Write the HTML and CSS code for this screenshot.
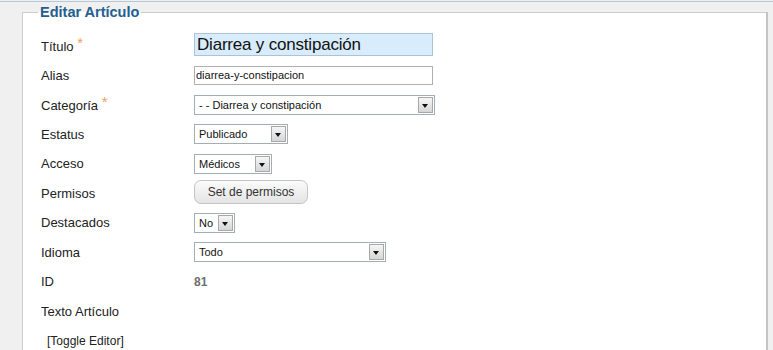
FILE: index.html
```html
<!DOCTYPE html>
<html lang="es">
<head>
    <meta charset="UTF-8">
    <title>Editar Artículo</title>
    <link rel="stylesheet" href="styles.css">
</head>
<body>
    <div class="topline"></div>
    <div class="page">
        <fieldset class="adminform">
            <legend>Editar Artículo</legend>

            <div class="row">
                <label>Título <span class="star">*</span></label>
                <input class="title-input" type="text" value="Diarrea y constipación">
            </div>

            <div class="row">
                <label>Alias</label>
                <input class="alias-input" type="text" value="diarrea-y-constipacion">
            </div>

            <div class="row">
                <label>Categoría <span class="star">*</span></label>
                <div class="select sel-cat"><span class="val">- - Diarrea y constipación</span><span class="arrow"></span></div>
            </div>

            <div class="row">
                <label>Estatus</label>
                <div class="select sel-state"><span class="val">Publicado</span><span class="arrow"></span></div>
            </div>

            <div class="row">
                <label>Acceso</label>
                <div class="select sel-access"><span class="val">Médicos</span><span class="arrow"></span></div>
            </div>

            <div class="row">
                <label>Permisos</label>
                <button class="perm-btn">Set de permisos</button>
            </div>

            <div class="row">
                <label>Destacados</label>
                <div class="select sel-feat"><span class="val">No</span><span class="arrow"></span></div>
            </div>

            <div class="row">
                <label>Idioma</label>
                <div class="select sel-lang"><span class="val">Todo</span><span class="arrow"></span></div>
            </div>

            <div class="row">
                <label>ID</label>
                <span class="readonly">81</span>
            </div>

            <div class="row">
                <label class="wide">Texto Artículo</label>
            </div>

            <div class="row toggle-row">
                <a href="#">[Toggle Editor]</a>
            </div>
        </fieldset>
    </div>
</body>
</html>
```

FILE: styles.css
```css
body {
    margin: 0;
    background-color: #f0f0f0;
    font-family: "Liberation Sans", Arial, sans-serif;
    color: #333;
    height: 350px;
    overflow: hidden;
}
.topline {
    height: 1px;
    margin-top: 1px;
    background-color: #b4c8dc;
}
.page {
    padding: 0 5px 0 22px;
}
.adminform {
    margin: 2px 0 0 0;
    padding: 11px 0 0 18px;
    border: 1px solid #cccccc;
    border-right: 2px solid #c4c4c4;
    background-color: #fff;
    height: 400px;
}
.adminform legend {
    padding: 0 2px;
    margin-left: -3px;
    font-size: 14.5px;
    font-weight: bold;
    color: #24608f;
}
.row {
    display: flex;
    align-items: center;
    height: 29.5px;
}
.row label {
    width: 153px;
    flex: none;
    font-size: 13px;
    color: #222;
}
.star {
    position: relative;
    top: -3px;
    font-size: 15px;
    color: #eea25c;
}
input {
    font-family: "Liberation Sans", Arial, sans-serif;
    border: 1px solid #b0b0b0;
    margin: 0;
    box-sizing: border-box;
}
.title-input {
    width: 239px;
    height: 23px;
    margin-top: -2px;
    padding: 0 0 0 2px;
    font-size: 17px;
    letter-spacing: -0.2px;
    color: #111;
    background-color: #d9ecfb;
    border-color: #a9c3da;
}
.alias-input {
    width: 239px;
    height: 19px;
    padding: 0 1px;
    font-size: 11px;
    color: #111;
}
.select {
    display: flex;
    align-items: center;
    height: 20px;
    box-sizing: border-box;
    border: 1px solid #a5acb2;
    background-color: #fff;
    font-size: 11px;
    color: #111;
}
.select .val {
    flex: 1;
    padding-left: 4px;
    white-space: nowrap;
}
.select .arrow {
    width: 15px;
    height: 16px;
    margin-right: 1px;
    box-sizing: border-box;
    border: 1px solid #a8a8a8;
    background: linear-gradient(#f6f6f6, #d6d6d6);
    position: relative;
}
.select .arrow::after {
    content: "";
    position: absolute;
    left: 3px;
    top: 6px;
    border-left: 3.5px solid transparent;
    border-right: 3.5px solid transparent;
    border-top: 4px solid #111;
}
.sel-cat { width: 241px; }
.sel-state { width: 94px; }
.sel-access { width: 78px; }
.sel-feat { width: 41px; }
.sel-lang { width: 192px; }
.perm-btn {
    width: 114px;
    height: 24px;
    margin-top: -2px;
    border: 1px solid #c4c4c4;
    border-radius: 7px;
    background: linear-gradient(#fbfbfb, #e4e4e4);
    font-family: "Liberation Sans", Arial, sans-serif;
    font-size: 12px;
    color: #333;
    padding: 0;
}
.readonly {
    font-size: 12px;
    font-weight: bold;
    color: #6e6e6e;
}
.toggle-row a {
    margin-left: 6px;
    font-size: 12px;
    color: #222;
    text-decoration: none;
}
```
